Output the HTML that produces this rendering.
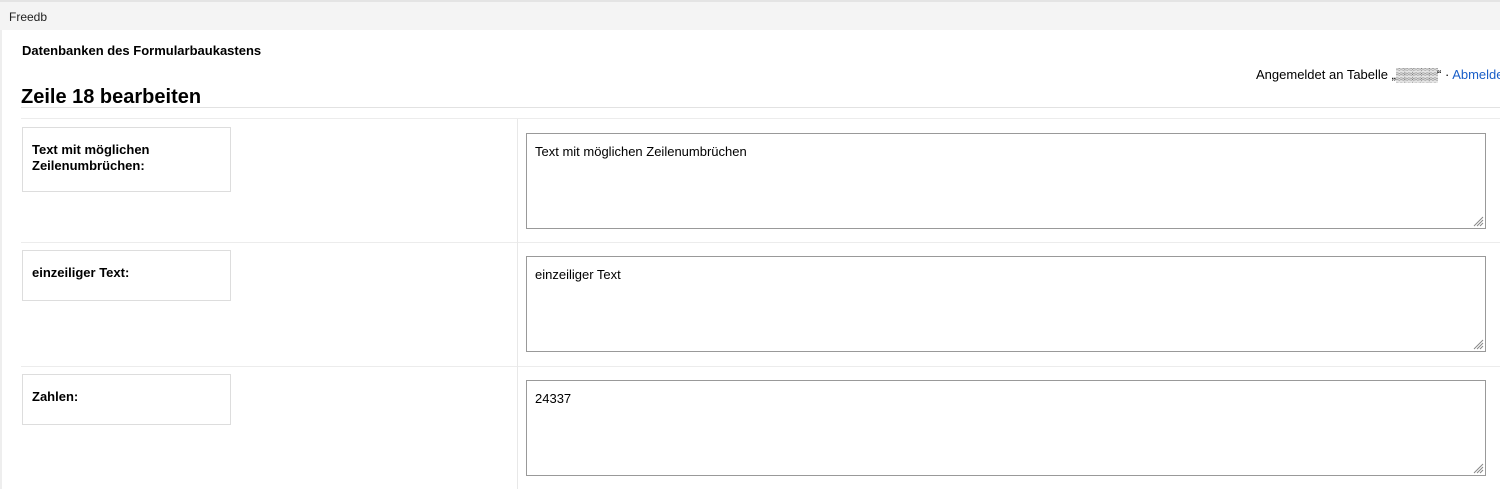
<!DOCTYPE html>
<html><head><style>
body{margin:0;width:1500px;height:489px;overflow:hidden;background:#fff;font-family:"Liberation Sans",Arial,sans-serif;color:#000;position:relative}
.top{position:absolute;left:0;top:0;width:1500px;height:30px;background:#f4f4f4;border-top:2px solid #e4e4e4;box-sizing:border-box;font-size:12px}
.top span{position:absolute;left:9px;top:8px;color:#222}
.side{position:absolute;left:0;top:30px;width:2px;height:459px;background:#eee}
.t{position:absolute;white-space:nowrap}
.hl{position:absolute;height:1px;background:#e2e2e2}
.vl{position:absolute;left:517px;width:1px;background:#e8e8e8}
.lab{position:absolute;left:22px;width:207px;border:1px solid #ddd;font-weight:bold;font-size:13px;line-height:16px;box-sizing:content-box}
.lab div{padding:14px 0 0 9px}
.ta{position:absolute;left:526px;width:958px;height:94px;border:1px solid #999;font-size:13px}
.ta div{padding:10px 0 0 8px}
.ta svg{position:absolute;right:1px;bottom:1px}
</style></head><body>
<div class="top"><span>Freedb</span></div>
<div class="side"></div>
<div class="t" style="left:22px;top:43px;font-size:13px;font-weight:bold">Datenbanken des Formularbaukastens</div>
<div class="t" style="left:1256px;top:67px;font-size:13px">Angemeldet an Tabelle „<span style="letter-spacing:-1px;color:#333">▒▒▒▒▒</span>“ · <span style="color:#1a5fc8">Abmelden</span></div>
<div class="t" style="left:21px;top:86px;font-size:20px;font-weight:bold">Zeile 18 bearbeiten</div>
<div class="hl" style="left:21px;top:107px;width:1479px"></div>
<div class="hl" style="left:21px;top:118px;width:1479px;background:#ececec"></div>
<div class="hl" style="left:21px;top:242px;width:1479px;background:#ececec"></div>
<div class="hl" style="left:21px;top:366px;width:1479px;background:#ececec"></div>
<div class="vl" style="top:119px;height:370px"></div>
<div class="lab" style="top:127px;height:63px"><div>Text mit möglichen<br>Zeilenumbrüchen:</div></div>
<div class="lab" style="top:250px;height:49px"><div>einzeiliger Text:</div></div>
<div class="lab" style="top:374px;height:49px"><div>Zahlen:</div></div>
<div class="ta" style="top:133px"><div>Text mit möglichen Zeilenumbrüchen</div><svg width="11" height="11"><path d="M10 1L1 10M10 4L4 10M10 7L7 10" stroke="#888"/></svg></div>
<div class="ta" style="top:256px"><div>einzeiliger Text</div><svg width="11" height="11"><path d="M10 1L1 10M10 4L4 10M10 7L7 10" stroke="#888"/></svg></div>
<div class="ta" style="top:380px"><div>24337</div><svg width="11" height="11"><path d="M10 1L1 10M10 4L4 10M10 7L7 10" stroke="#888"/></svg></div>
</body></html>
